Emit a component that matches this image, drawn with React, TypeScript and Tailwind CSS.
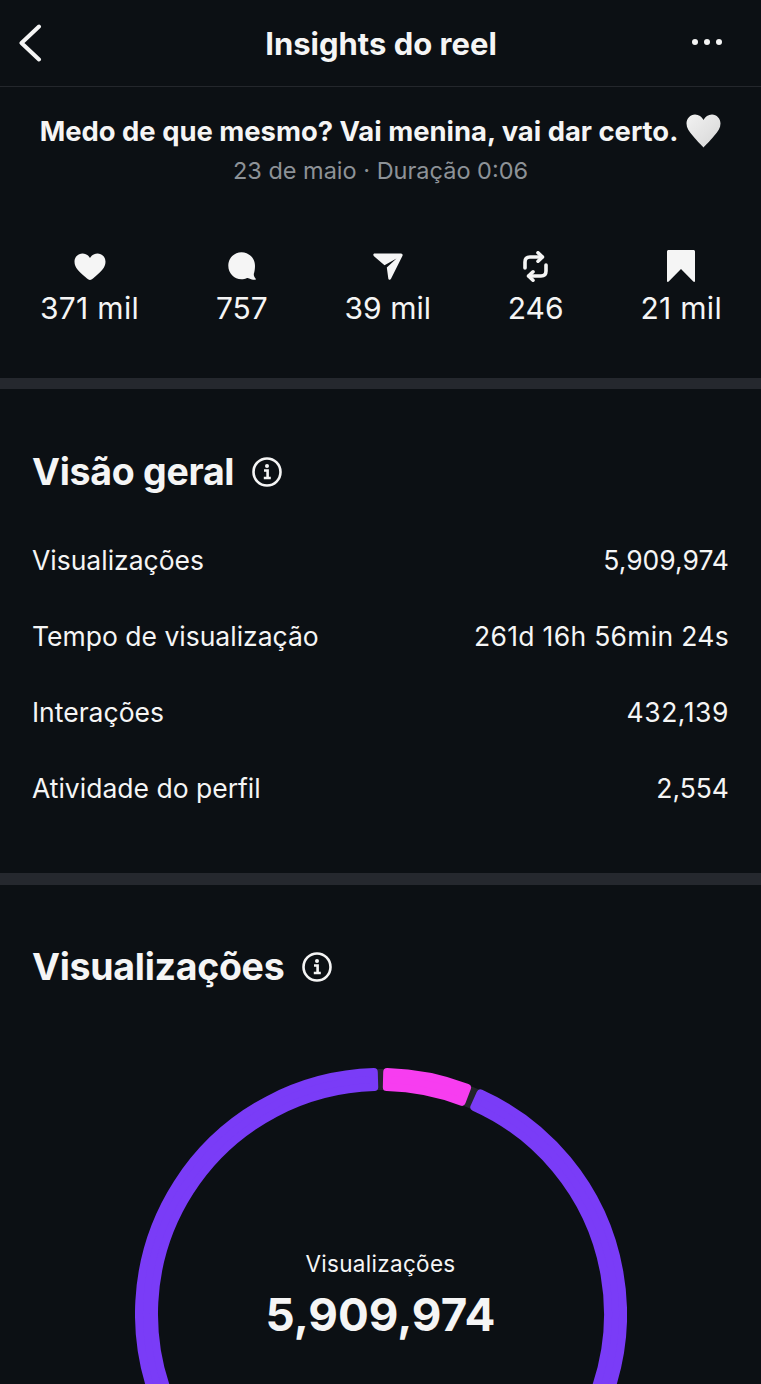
// Insights do reel screen
import type { ReactNode } from "react";

const RING = { cx: 246, cy: 246, outer: 246, inner: 223 };

// arc band with slightly rounded ends: filled path plus a same-colour round-join stroke
function bandPath(fromDeg: number, toDeg: number) {
  const pad = 4;
  const ro = RING.outer - pad;
  const ri = RING.inner + pad;
  const point = (r: number, deg: number) => {
    const a = (deg * Math.PI) / 180;
    return `${(RING.cx + r * Math.sin(a)).toFixed(2)} ${(RING.cy - r * Math.cos(a)).toFixed(2)}`;
  };
  const large = toDeg - fromDeg > 180 ? 1 : 0;
  return `M${point(ro, fromDeg)} A${ro} ${ro} 0 ${large} 1 ${point(ro, toDeg)} L${point(ri, toDeg)} A${ri} ${ri} 0 ${large} 0 ${point(ri, fromDeg)} Z`;
}

// the 1s run wider in the original font, hence the per-row tracking
const overview = [
  { label: "Visualizações", value: "5,909,974", tracking: "" },
  { label: "Tempo de visualização", value: "261d 16h 56min 24s", tracking: "tracking-[0.3px]" },
  { label: "Interações", value: "432,139", tracking: "tracking-[0.55px]" },
  { label: "Atividade do perfil", value: "2,554", tracking: "" },
];

const stats: { icon: ReactNode; value: string; tracking: string }[] = [
  {
    value: "371 mil",
    tracking: "tracking-[0.3px]",
    icon: (
      <svg width="32" height="27" viewBox="0 0 32 27" fill="#f5f5f5">
        <path d="M16 27C14.8 27 13.6 26 11 23.8 5.5 19.200 0.500 15 0.500 8.800 0.500 3.800 4.200 0.500 8.500 0.500 11.700 0.500 14.500 2.200 16 5 17.500 2.200 20.300 0.500 23.500 0.500 27.800 0.500 31.500 3.800 31.500 8.800 31.500 15 26.500 19.200 21 23.800 18.400 26 17.200 27 16 27Z" />
      </svg>
    ),
  },
  {
    value: "757",
    tracking: "",
    icon: (
      <svg width="28" height="28" viewBox="0 0 28 28" fill="#f5f5f5">
        <path d="M13.500 0.300C6.100 0.300 0.300 6.200 0.300 13.700 0.300 21.200 6.100 27.300 13.500 27.300 15.400 27.300 17 27 18.500 26.200 19.500 25.700 20.200 25.900 21.200 26.500 23 27.500 25.500 28 27.300 27.800 28 27.700 28 27 27.500 26.500 26.400 25.300 25.700 23.700 25.800 22 26.500 20 27 16.500 27 13.700 27 6.200 20.900 0.300 13.500 0.300Z" />
      </svg>
    ),
  },
  {
    value: "39 mil",
    tracking: "",
    icon: (
      <svg width="30" height="27" viewBox="0 0 30 27" fill="#f5f5f5">
        <path d="M1.500 0.500H28C29.300 0.500 30 1.700 29.500 2.800L18 25.800C17.300 27.200 15.500 26.900 15.300 25.400L13.800 14.500 23.500 5.500 11.500 12.300 1 3.200C-0.200 2.200 0.300 0.500 1.500 0.500Z" />
      </svg>
    ),
  },
  {
    value: "246",
    tracking: "",
    icon: (
      <svg width="25" height="31" viewBox="0 0 25 31" fill="none" stroke="#f5f5f5" strokeWidth="3.600" strokeLinecap="round" strokeLinejoin="round">
        <path d="M2 17V11Q2 6 7 6H19" />
        <path d="M15 1.800L19.500 6 15 10.200" />
        <path d="M23 14V20Q23 25 18 25H6" />
        <path d="M10 20.800L5.500 25 10 29.200" />
      </svg>
    ),
  },
  {
    value: "21 mil",
    tracking: "tracking-[0.3px]",
    icon: (
      <svg width="28" height="32" viewBox="0 0 28 32" fill="#f5f5f5">
        <path d="M1.500 0H26.500C27.300 0 28 0.700 28 1.500V31C28 32 27 32.200 26.300 31.500L14 19 1.700 31.500C1 32.200 0 32 0 31V1.500C0 0.700 0.700 0 1.500 0Z" />
      </svg>
    ),
  },
];

function InfoIcon() {
  return (
    <svg width="30" height="30" viewBox="0 0 30 30" fill="none">
      <circle cx="15" cy="15" r="13.500" stroke="#f5f5f5" strokeWidth="2.600" />
      <circle cx="15" cy="9" r="2" fill="#f5f5f5" />
      <path d="M12 13.500H15.600V20.800M11.800 21H18.800" stroke="#f5f5f5" strokeWidth="2.600" />
    </svg>
  );
}

function SectionTitle({ children }: { children: ReactNode }) {
  return (
    <div className="flex items-center gap-[18px]">
      <h2 className="text-[37.500px] leading-[46px] font-bold tracking-[-0.3px] text-[#f5f5f5]">{children}</h2>
      <InfoIcon />
    </div>
  );
}

export default function App() {
  return (
    <div
      className="h-[1384px] w-[761px] overflow-hidden bg-[#0c1014] text-[#f5f5f5]"
      style={{ fontFamily: "Inter, 'Liberation Sans', sans-serif" }}
    >
      {/* HEADER */}
      <header className="grid h-[87px] grid-cols-[1fr_auto_1fr] items-center border-b border-[#24272c] pl-[18px] pr-[39px]">
        <svg width="24" height="38" viewBox="0 0 24 38" fill="none" className="mb-[1px]">
          <path d="M21 2.500L3.500 19 21 35.500" stroke="#f5f5f5" strokeWidth="4" strokeLinecap="round" strokeLinejoin="round" />
        </svg>
        <h1 className="translate-x-[11px] text-[31px] font-bold leading-none">Insights do reel</h1>
        <svg width="30" height="6" viewBox="0 0 30 6" fill="#f5f5f5" className="mb-[2px] justify-self-end">
          <circle cx="3" cy="3" r="3" />
          <circle cx="15" cy="3" r="3" />
          <circle cx="27" cy="3" r="3" />
        </svg>
      </header>

      {/* CAPTION */}
      <div className="flex flex-col items-center pt-[25px]">
        <div className="flex items-center gap-[8px]">
          <p className="text-[27.400px] font-bold leading-[38px]">Medo de que mesmo? Vai menina, vai dar certo.</p>
          <svg width="35" height="34" viewBox="0 0 35 34">
            <defs>
              <linearGradient id="emojiHeart" x1="0" y1="0" x2="1" y2="1">
                <stop offset="0" stopColor="#f2f2f2" />
                <stop offset="1" stopColor="#d6d6d6" />
              </linearGradient>
            </defs>
            <path fill="url(#emojiHeart)" d="M17.500 33.500C15.500 31 11.500 27.500 7 22 3 17.500 0.500 14 0.500 9.500 0.500 4.500 4.300 0.500 9 0.500 12.800 0.500 15.800 2.700 17.500 6 19.200 2.700 22.200 0.500 26 0.500 30.700 0.500 34.500 4.500 34.500 9.500 34.500 14 32 17.500 28 22 23.500 27.500 19.500 31 17.500 33.500Z" />
          </svg>
        </div>
        <p className="mt-[6px] text-[23.500px] leading-[30px] text-[#8d9297]">23 de maio · Duração 0:06</p>
      </div>

      {/* STATS */}
      <div className="flex justify-between pl-[40px] pr-[39px] pt-[64px]">
        {stats.map((stat) => (
          <div key={stat.value} className="flex flex-col items-center">
            <div className="flex h-[32px] items-center justify-center">{stat.icon}</div>
            <span className={`mt-[8px] text-[30px] leading-[36px] ${stat.tracking}`}>{stat.value}</span>
          </div>
        ))}
      </div>

      <div className="mt-[52px] h-[11px] bg-[#25282e]" />

      {/* OVERVIEW */}
      <section className="px-[32px] pt-[60px]">
        <SectionTitle>Visão geral</SectionTitle>
        <ul className="mt-[28px] flex flex-col">
          {overview.map((row) => (
            <li key={row.label} className="flex h-[76px] items-center justify-between text-[26.500px]">
              <span>{row.label}</span>
              <span className={row.tracking}>{row.value}</span>
            </li>
          ))}
        </ul>
      </section>

      <div className="mt-[46px] h-[12px] bg-[#25282e]" />

      {/* VIEWS */}
      <section className="pt-[59px]">
        <div className="px-[32px]">
          <SectionTitle>Visualizações</SectionTitle>
        </div>
        <div className="relative mx-auto mt-[78px] h-[492px] w-[492px]">
          <svg width="492" height="492" viewBox="0 0 492 492">
            <circle cx="246" cy="246" r="234.500" fill="none" stroke="#22252a" strokeWidth="21" />
            <path d={bandPath(24.280, 358.290)} fill="#7a3cf7" stroke="#7a3cf7" strokeWidth="8" strokeLinejoin="round" />
            <path d={bandPath(1.470, 20.820)} fill="#f73df0" stroke="#f73df0" strokeWidth="8" strokeLinejoin="round" />
          </svg>
          <div className="absolute inset-x-0 top-[181px] flex flex-col items-center">
            <span className="text-[22.500px] leading-[30px] tracking-[0.3px]">Visualizações</span>
            <span className="mt-[9px] text-[45.700px] font-bold leading-[54px]">5,909,974</span>
          </div>
        </div>
      </section>
    </div>
  );
}
